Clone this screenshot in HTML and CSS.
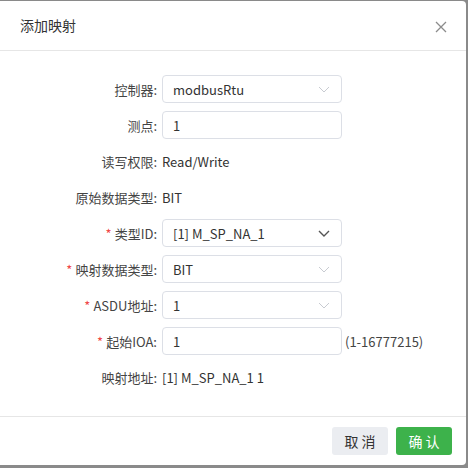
FILE: index.html
```html
<!DOCTYPE html>
<html>
<head>
<meta charset="utf-8">
<link rel="stylesheet" href="styles.css">
</head>
<body>
<div class="dialog">
  <div class="header">
    <span class="title">添加映射</span>
    <svg class="close" width="12" height="12" viewBox="0 0 12 12"><path d="M1 1L11 11M11 1L1 11" stroke="#8c8c8c" stroke-width="1.3" fill="none"/></svg>
  </div>
  <div class="body">
    <div class="form">
      <div class="label">控制器:</div>
      <div class="field select"><span>modbusRtu</span><svg class="chev" width="12" height="7" viewBox="0 0 12 7"><path d="M1 1L6 6L11 1" stroke="#c8cbd1" stroke-width="1" fill="none"/></svg></div>
      <div></div>

      <div class="label">测点:</div>
      <div class="field"><span>1</span></div>
      <div></div>

      <div class="label">读写权限:</div>
      <div class="text">Read/Write</div>
      <div></div>

      <div class="label">原始数据类型:</div>
      <div class="text">BIT</div>
      <div></div>

      <div class="label"><span class="req">*</span>类型ID:</div>
      <div class="field select"><span>[1] M_SP_NA_1</span><svg class="chev" width="12" height="7" viewBox="0 0 12 7"><path d="M1 1L6 6L11 1" stroke="#555" stroke-width="1.4" fill="none"/></svg></div>
      <div></div>

      <div class="label"><span class="req">*</span>映射数据类型:</div>
      <div class="field select"><span>BIT</span><svg class="chev" width="12" height="7" viewBox="0 0 12 7"><path d="M1 1L6 6L11 1" stroke="#c8cbd1" stroke-width="1" fill="none"/></svg></div>
      <div></div>

      <div class="label"><span class="req">*</span>ASDU地址:</div>
      <div class="field select"><span>1</span><svg class="chev" width="12" height="7" viewBox="0 0 12 7"><path d="M1 1L6 6L11 1" stroke="#c8cbd1" stroke-width="1" fill="none"/></svg></div>
      <div></div>

      <div class="label"><span class="req">*</span>起始IOA:</div>
      <div class="field"><span>1</span></div>
      <div class="hint">(1-16777215)</div>

      <div class="label">映射地址:</div>
      <div class="text wide">[1] M_SP_NA_1 1</div>
      <div></div>
    </div>
  </div>
  <div class="footer">
    <button class="btn cancel">取 消</button>
    <button class="btn ok">确 认</button>
  </div>
</div>
</body>
</html>
```
FILE: styles.css
```css
html, body {
  margin: 0;
  padding: 0;
}
body {
  width: 468px;
  height: 468px;
  background: #8a8a8a;
  font-family: "Noto Sans CJK SC", "Noto Sans", sans-serif;
  color: #333;
  overflow: hidden;
}
.dialog {
  margin-top: 1px;
  width: 466px;
  height: 464px;
  background: #fff;
  border-radius: 0 4px 4px 0;
  display: flex;
  flex-direction: column;
}
.header {
  height: 49px;
  border-bottom: 1px solid #e6e6e6;
  display: flex;
  align-items: center;
  justify-content: space-between;
  padding: 0 19px 0 20px;
}
.title {
  font-size: 14px;
  color: #333;
  margin-top: -1px;
}
.close {
  display: block;
  margin-top: 2px;
}
.body {
  flex: 1;
  padding-top: 24px;
}
.form {
  display: grid;
  grid-template-columns: 162px 180px auto;
  grid-auto-rows: 28px;
  row-gap: 8px;
  align-items: center;
  font-size: 13px;
}
.label {
  text-align: right;
  padding-right: 5px;
  color: #444;
  white-space: nowrap;
}
.req {
  color: #f04848;
  margin-right: 3px;
}
.field {
  height: 26px;
  border: 1px solid #dcdfe6;
  border-radius: 4px;
  display: flex;
  align-items: center;
  justify-content: space-between;
  padding: 0 11px 0 10px;
  color: #333;
}
.chev {
  display: block;
}
.text {
  color: #333;
  white-space: nowrap;
}
.hint {
  margin-left: 3px;
  color: #444;
  white-space: nowrap;
}
.footer {
  height: 48px;
  border-top: 1px solid #e6e6e6;
  display: flex;
  align-items: center;
  justify-content: flex-end;
  gap: 8px;
  padding-right: 14px;
}
.btn {
  width: 56px;
  height: 28px;
  border: none;
  border-radius: 3px;
  font-family: "Noto Sans CJK SC", sans-serif;
  font-size: 14px;
  padding: 0;
}
.cancel {
  background: #ebedf1;
  color: #333;
}
.ok {
  background: #3db24b;
  color: #fff;
}
```
